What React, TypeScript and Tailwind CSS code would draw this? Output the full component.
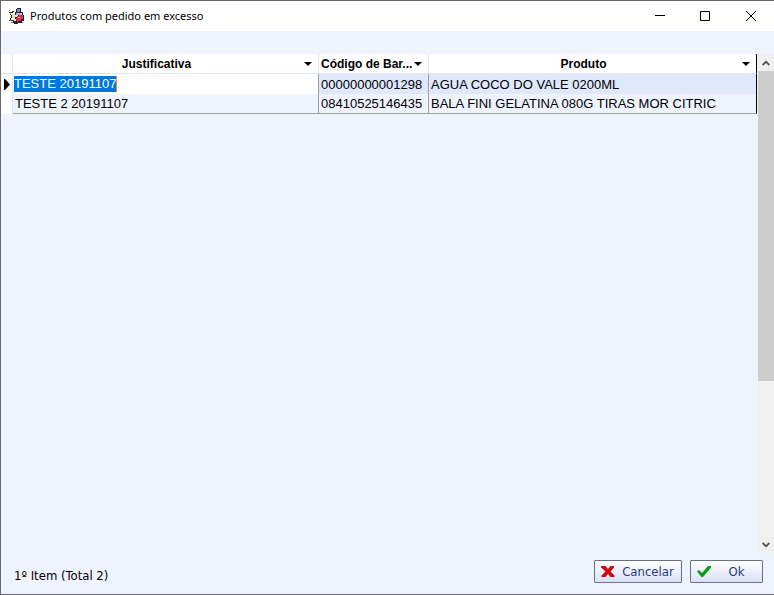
import React, {useState} from 'react';

type Item = {
  justificativa: string;
  codigo: string;
  produto: string;
};

const items: Item[] = [
  {justificativa: 'TESTE 20191107', codigo: '00000000001298', produto: 'AGUA COCO DO VALE 0200ML'},
  {justificativa: 'TESTE 2 20191107', codigo: '08410525146435', produto: 'BALA FINI GELATINA 080G TIRAS MOR CITRIC'},
];

const AppIcon: React.FC = () => (
    <svg width="16" height="16" viewBox="0 0 16 16" shapeRendering="crispEdges" aria-hidden="true">
      <path d="M8 0h4v4h2v3h1v6h-2v2H9v1H5v-1H4v-2H2v-1H1v-2h1V7H1V5H0V4h3V3h2v1h2V1h1z" fill="#2a242e"/>
      <path d="M8 1h3v3H8z" fill="#8488b8"/>
      <path d="M1 5h5v3H3V7H2V6H1zM3 8h3v3H3z" fill="#dfe3a4"/>
      <path d="M4 4h2v2H4zM2 10h3v2H2z" fill="#f6f4ee"/>
      <path d="M7 5h6v2H7z" fill="#b9b4dc"/>
      <path d="M6 7h3v2H6zM5 11h2v2H5z" fill="#e9dfe2"/>
      <path d="M8 8h2V7h4v4h-2v2H9v1H8v-2H7v-2h1z" fill="#dd3049"/>
      <path d="M9 9h2v1H9z" fill="#f39aa4"/>
      <path d="M0 2h1v1H0zM0 12h2v1H0zM2 14h2v1H2zM13 14h1v1h-1z" fill="#6d6870"/>
    </svg>
);

const HeaderCell: React.FC<{ title: string; align: string; className?: string }> = ({title, align, className = ''}) => (
    <th scope="col" className={`h-5 border-b border-[#dde6f8] bg-white p-0 font-bold ${className}`}>
      <button type="button" className="flex h-full w-full items-center pr-1.5 pl-0.5">
        <span className={`grow whitespace-nowrap ${align}`}>{title}</span>
        <svg width="8" height="4" viewBox="0 0 8 4" className="shrink-0" aria-hidden="true">
          <path d="M0 0h8L4 4z" fill="#000"/>
        </svg>
      </button>
    </th>
);

const TitleBar: React.FC = () => (
    <header className="flex h-[30px] shrink-0 items-center bg-white pl-2">
      <AppIcon/>
      <h1 className="grow pl-[5px] font-['Noto_Sans','Open_Sans',sans-serif] text-[11px]">
        Produtos com pedido em excesso
      </h1>
      <button type="button" aria-label="Minimizar" className="flex h-full w-[45px] items-center justify-center">
        <svg width="10" height="10" viewBox="0 0 10 10"><path d="M0 4.5h10" stroke="#000"/></svg>
      </button>
      <button type="button" aria-label="Maximizar" className="flex h-full w-[46px] items-center justify-center">
        <svg width="10" height="10" viewBox="0 0 10 10"><path d="M.5.5h9v9h-9z" fill="none" stroke="#000"/></svg>
      </button>
      <button type="button" aria-label="Fechar" className="flex h-full w-[46px] items-center justify-center">
        <svg width="10" height="10" viewBox="0 0 10 10"><path d="M0 0l10 10M10 0L0 10" stroke="#000"/></svg>
      </button>
    </header>
);

// barra de rolagem
const ScrollBar: React.FC = () => (
    <div className="ml-px flex w-4 shrink-0 flex-col bg-[#f0f0f0]">
      <button type="button" aria-label="Rolar para cima" className="flex h-[17px] items-center justify-center">
        <svg width="8" height="6" viewBox="0 0 8 6">
          <path d="M.7 5L4 1.7 7.3 5" fill="none" stroke="#505050" strokeWidth="1.8"/>
        </svg>
      </button>
      <div className="grow">
        <div className="h-2/3 bg-[#cdcdcd]"/>
      </div>
      <button type="button" aria-label="Rolar para baixo" className="flex h-[17px] items-center justify-center">
        <svg width="8" height="6" viewBox="0 0 8 6">
          <path d="M.7 1L4 4.300 7.3 1" fill="none" stroke="#505050" strokeWidth="1.8"/>
        </svg>
      </button>
    </div>
);

const ItemsTable: React.FC = () => {
  const [selected, setSelected] = useState(0);

  return (
      <table className="w-full table-fixed border-separate border-spacing-0 font-['Liberation_Sans',Arial,sans-serif]">
        <colgroup>
          <col className="w-3"/>
          <col className="w-[306px]"/>
          <col className="w-[110px]"/>
          <col/>
        </colgroup>
        <thead className="text-xs">
          <tr>
            <td className="border-r border-b border-[#dde6f8] bg-white p-0"/>
            <HeaderCell title="Justificativa" align="pr-1.5 text-center" className="border-r"/>
            <HeaderCell title="Código de Bar..." align="text-left" className="border-r"/>
            <HeaderCell title="Produto" align="pr-1.5 text-center" className="border-r border-r-black"/>
          </tr>
        </thead>
        <tbody className="text-[13px] leading-[18px]">
          {items.map((item, index) => {
            const active = index === selected;
            const last = index === items.length - 1;
            const line = last ? 'border-b border-b-[#a0a0a0]' : '';
            const cell = `h-5 overflow-hidden border-r px-0.5 pt-px pb-0 whitespace-nowrap ${line} ${active ? 'bg-[#dfe8fd]' : 'bg-[#eff3fe]'}`;
            return (
                <tr key={item.codigo} onClick={() => setSelected(index)}>
                  <td className="border-r border-[#dde6f8] bg-white p-0">
                    {active && (
                        <svg width="6" height="11" viewBox="0 0 6 11" className="ml-[3px]" aria-hidden="true">
                          <path d="M0 0h1l5 5.500L1 11H0z" fill="#000"/>
                        </svg>
                    )}
                  </td>
                  {active ? (
                      <td className={`h-5 border-r border-r-[#a0a0a0] bg-white p-0 pl-px ${line}`}>
                        <input
                            aria-label="Justificativa"
                            defaultValue={item.justificativa}
                            className="block h-4 field-sizing-content border-r border-[#ff8728] bg-[#0078d7] leading-4 text-white outline-none"
                        />
                      </td>
                  ) : (
                      <td className={`${cell} border-r-[#a0a0a0]`}>{item.justificativa}</td>
                  )}
                  <td className={`${cell} border-r-[#a0a0a0]`}>{item.codigo}</td>
                  <td className={`${cell} border-r-black`}>{item.produto}</td>
                </tr>
            );
          })}
        </tbody>
      </table>
  );
};

const footerButton = 'flex h-[23px] items-center rounded-[1px] border border-[#6b6f80] bg-linear-to-b from-white to-[#d9e0f8] pl-1.5 text-[#1f3f77]';

export default function App() {
  return (
      <div className="flex min-h-screen flex-col border border-r-0 border-[#69696d] bg-[#eff3fe] text-black">
        <TitleBar/>
        <main className="mt-[23px] flex grow">
          <div className="min-w-0 grow">
            <ItemsTable/>
          </div>
          <ScrollBar/>
        </main>
        <footer className="flex shrink-0 items-start gap-2 pt-[7px] pr-[11px] pb-[11px] pl-[13px] font-['DejaVu_Sans_Condensed','DejaVu_Sans',sans-serif] text-[13px] leading-5">
          <p className="-mb-1.5 grow pt-1.5">1º Item (Total 2)</p>
          <button type="button" className={`${footerButton} w-[88px]`}>
            <svg width="14" height="13" viewBox="0 0 14 13" aria-hidden="true">
              <path d="M0 1h4.500L7 4l2.500-3H13v1.500L9.500 6.500l4 4V12H9.500L7 9l-2.500 3H.5v-1.500l4-4L0 2.500z" fill="#cc0a10"/>
            </svg>
            <span className="grow text-center">Cancelar</span>
          </button>
          <button type="button" className={`${footerButton} w-[73px]`}>
            <svg width="14" height="13" viewBox="0 0 14 13" aria-hidden="true">
              <path d="M0 6.500L2 5l3 3 6-7h3v1.500L6 12H4.500z" fill="#0a9c14"/>
            </svg>
            <span className="grow text-center">Ok</span>
          </button>
        </footer>
      </div>
  );
}
